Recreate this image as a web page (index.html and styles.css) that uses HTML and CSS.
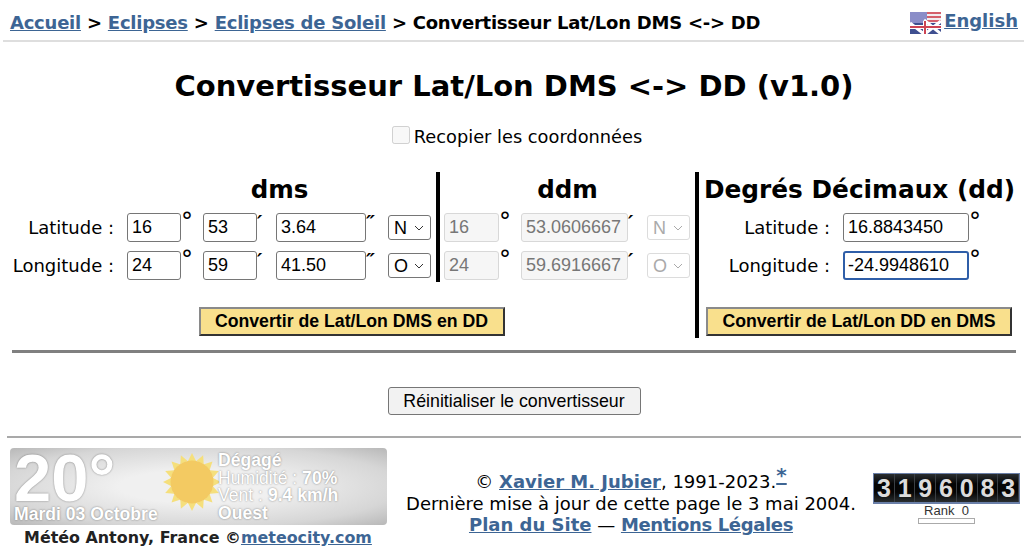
FILE: index.html
```html
<!DOCTYPE html>
<html lang="fr">
<head>
  <meta charset="UTF-8" />
  <meta name="viewport" content="width=device-width, initial-scale=1.0"/>
  <title>Convertisseur Lat/Lon DMS &lt;-&gt; DD</title>
  <link rel="stylesheet" href="styles.css">
</head>
<body>

  <div class="top-bar">
    <div class="crumbs">
      <a href="#">Accueil</a> &gt; <a href="#">Eclipses</a> &gt; <a href="#">Eclipses de Soleil</a> &gt; Convertisseur Lat/Lon DMS &lt;-&gt; DD
    </div>
    <div class="lang">
      <svg class="flag" viewBox="0 0 31 22" width="31" height="22">
        <rect width="31" height="22" fill="#f1edf1"/>
        <rect x="15" y="0" width="16" height="2" fill="#d4606c"/>
        <rect x="15" y="4" width="16" height="2" fill="#d4606c"/>
        <rect x="15" y="8" width="16" height="2" fill="#d4606c"/>
        <rect width="17" height="11" fill="#8a8dc8"/>
        <rect y="11" width="31" height="11" fill="#3f4f90"/>
        <path d="M0 11 L14 22 M31 9 L15 22" stroke="#fff" stroke-width="3"/>
        <path d="M14 8 L31 22" stroke="#fff" stroke-width="3"/>
        <path d="M0 15 H31 M15 9 V22" stroke="#fff" stroke-width="4"/>
        <path d="M0 15 H31 M15 9 V22" stroke="#cc4454" stroke-width="2"/>
      </svg>
      <a href="#">English</a>
    </div>
  </div>

  <h1>Convertisseur Lat/Lon DMS &lt;-&gt; DD (v1.0)</h1>

  <label class="copy-row">
    <input type="checkbox" disabled>
    Recopier les coordonnées
  </label>

  <div class="converter">
    <div class="left-part">
      <div class="columns">
        <div class="col-dms">
          <h2 class="dms-title">dms</h2>
          <div class="row">
            <span class="row-label">Latitude :</span>
            <input class="w-deg" type="text" value="16"><span class="mark gap-deg">°</span>
            <input class="w-deg" type="text" value="53"><span class="mark slant gap-min">′</span>
            <input class="w-sec" type="text" value="3.64"><span class="mark slant gap-deg">″</span>
            <select class="w-sel"><option>N</option></select>
          </div>
          <div class="row">
            <span class="row-label">Longitude :</span>
            <input class="w-deg" type="text" value="24"><span class="mark gap-deg">°</span>
            <input class="w-deg" type="text" value="59"><span class="mark slant gap-min">′</span>
            <input class="w-sec" type="text" value="41.50"><span class="mark slant gap-deg">″</span>
            <select class="w-sel"><option>O</option></select>
          </div>
        </div>
        <div class="col-ddm">
          <h2>ddm</h2>
          <div class="row">
            <input class="w-deg-off" type="text" value="16" disabled><span class="mark gap-deg">°</span>
            <input class="w-ddm" type="text" value="53.0606667" disabled><span class="mark slant gap-min">′</span>
            <select class="w-sel" disabled><option>N</option></select>
          </div>
          <div class="row">
            <input class="w-deg-off" type="text" value="24" disabled><span class="mark gap-deg">°</span>
            <input class="w-ddm" type="text" value="59.6916667" disabled><span class="mark slant gap-min">′</span>
            <select class="w-sel" disabled><option>O</option></select>
          </div>
        </div>
      </div>
      <div class="button-row">
        <button class="convert" type="button">Convertir de Lat/Lon DMS en DD</button>
      </div>
    </div>
    <div class="col-dd">
      <h2>Degrés Décimaux (dd)</h2>
      <div class="row">
        <span class="row-label dd-label">Latitude :</span>
        <input class="w-dd" type="text" value="16.8843450"><span class="mark">°</span>
      </div>
      <div class="row">
        <span class="row-label dd-label">Longitude :</span>
        <input class="w-dd focused" type="text" value="-24.9948610"><span class="mark">°</span>
      </div>
      <div class="button-row">
        <button class="convert" type="button">Convertir de Lat/Lon DD en DMS</button>
      </div>
    </div>
  </div>

  <hr class="rule-main">

  <div class="reset-row">
    <button class="reset" type="button">Réinitialiser le convertisseur</button>
  </div>

  <hr class="rule-foot">

  <div class="footer">
    <div class="weather-box">
      <div class="weather">
        <div class="weather-main">
          <div class="temp">20°</div>
          <div class="day">Mardi 03 Octobre</div>
        </div>
        <svg class="sun" viewBox="-30 -30 60 60" width="60" height="60">
          <g fill="#f5df7c">
            <polygon id="ray" points="-4,-21 0,-29 4,-21"/>
            <use href="#ray" transform="rotate(22.5)"/>
            <use href="#ray" transform="rotate(45)"/>
            <use href="#ray" transform="rotate(67.5)"/>
            <use href="#ray" transform="rotate(90)"/>
            <use href="#ray" transform="rotate(112.5)"/>
            <use href="#ray" transform="rotate(135)"/>
            <use href="#ray" transform="rotate(157.5)"/>
            <use href="#ray" transform="rotate(180)"/>
            <use href="#ray" transform="rotate(202.5)"/>
            <use href="#ray" transform="rotate(225)"/>
            <use href="#ray" transform="rotate(247.5)"/>
            <use href="#ray" transform="rotate(270)"/>
            <use href="#ray" transform="rotate(292.5)"/>
            <use href="#ray" transform="rotate(315)"/>
            <use href="#ray" transform="rotate(337.5)"/>
          </g>
          <circle r="21.5" fill="#f3ca62"/>
        </svg>
        <div class="weather-info">
          <b>Dégagé</b>
          <span>Humidité : <b>70%</b></span>
          <span>Vent : <b>9.4 km/h</b></span>
          <b>Ouest</b>
        </div>
      </div>
      <div class="weather-caption">Météo Antony, France ©<a href="#">meteocity.com</a></div>
    </div>

    <div class="credits">
      <div>© <a href="#"><b>Xavier M. Jubier</b></a>, 1991-2023.<a class="star" href="#"><b>*</b></a></div>
      <div>Dernière mise à jour de cette page le 3 mai 2004.</div>
      <div><a href="#"><b>Plan du Site</b></a> — <a class="legal" href="#"><b>Mentions Légales</b></a></div>
    </div>

    <div class="counter-box">
      <div class="counter">
        <span>3</span><span>1</span><span>9</span><span>6</span><span>0</span><span>8</span><span>3</span>
      </div>
      <div class="rank">Rank&nbsp; 0</div>
      <div class="rank-bar"></div>
    </div>
  </div>

</body>
</html>
```

FILE: styles.css
```css
html, body {
  margin: 0;
  padding: 0;
  background: #fff;
}

body {
  font-family: "DejaVu Sans", Verdana, sans-serif;
  color: #000;
  overflow: hidden;
  height: 550px;
}

a {
  color: #3d6594;
}

.top-bar {
  display: flex;
  justify-content: space-between;
  align-items: flex-start;
  height: 40px;
  margin-left: 3px;
  padding: 0 6px 0 7px;
  border-bottom: 2px solid #dedede;
  font-size: 18px;
  font-weight: bold;
  line-height: 46px;
}

.crumbs {
  white-space: nowrap;
  letter-spacing: -0.24px;
}

.lang {
  display: flex;
  align-items: flex-start;
  gap: 3px;
  line-height: 42px;
}

.flag {
  margin-top: 12px;
}

h1 {
  margin: 24px 0 0;
  padding-left: 4px;
  font-size: 29px;
  line-height: 40px;
  text-align: center;
  white-space: nowrap;
}

.copy-row {
  display: flex;
  justify-content: center;
  align-items: center;
  gap: 4px;
  height: 22px;
  margin-top: 19px;
  padding-left: 10px;
  font-size: 17.8px;
}

.copy-row input {
  width: 18px;
  height: 18px;
  margin: 0 0 2px;
}

.converter {
  display: flex;
  margin: 25px 8px 0 12px;
}

.left-part {
  width: 683px;
}

.columns {
  display: flex;
}

.col-dms {
  width: 424px;
  height: 110px;
  border-right: 4px solid #000;
}

.col-ddm {
  width: 255px;
  padding-left: 4px;
  box-sizing: border-box;
}

.col-dd {
  width: 317px;
  height: 166px;
  border-left: 4px solid #000;
}

h2 {
  height: 41px;
  margin: 0;
  font-size: 24.5px;
  line-height: 35px;
  text-align: center;
  white-space: nowrap;
}

.dms-title {
  padding-left: 111px;
}

.col-ddm h2 {
  padding-right: 4px;
}

.col-dd h2 {
  margin-left: 4px;
  font-size: 24.8px;
}

.row {
  display: flex;
  align-items: center;
  height: 29px;
  margin-bottom: 9px;
}

.row-label {
  width: 102px;
  margin-right: 13px;
  padding-bottom: 1px;
  font-size: 18px;
  text-align: right;
  white-space: nowrap;
}

.dd-label {
  width: 131px;
}

input[type="text"] {
  height: 29px;
  padding: 0 4px;
  box-sizing: border-box;
  border: 1px solid #767676;
  border-radius: 3px;
  background: #fff;
  color: #000;
  font-family: "Liberation Sans", Arial, sans-serif;
  font-size: 18px;
}

input[type="text"]:disabled {
  border-color: #d8d8d8;
  background: #f6f6f6;
  color: #777;
}

input.focused {
  border: 2px solid #2f5ea8;
  padding: 0 3px;
}

select {
  appearance: none;
  height: 25px;
  padding: 0 0 0 5px;
  box-sizing: border-box;
  border: 1px solid #767676;
  border-radius: 3px;
  background: #fff url("data:image/svg+xml,%3Csvg xmlns='http://www.w3.org/2000/svg' width='10' height='6'%3E%3Cpath d='M1 1l4 4 4-4' fill='none' stroke='%23333' stroke-width='1'/%3E%3C/svg%3E") no-repeat right 6px center;
  color: #000;
  font-family: "Liberation Sans", Arial, sans-serif;
  font-size: 18px;
}

select:disabled {
  border-color: #dcdcdc;
  background-image: url("data:image/svg+xml,%3Csvg xmlns='http://www.w3.org/2000/svg' width='10' height='6'%3E%3Cpath d='M1 1l4 4 4-4' fill='none' stroke='%23aaa' stroke-width='1'/%3E%3C/svg%3E");
  color: #aaa;
  opacity: 1;
}

.w-deg { width: 54px; }
.w-deg-off { width: 55px; }
.w-sec { width: 90px; }
.w-ddm { width: 107px; }
.w-dd { width: 126px; }
.w-sel { width: 43px; }

.mark {
  align-self: flex-start;
  box-sizing: border-box;
  font-size: 24px;
  line-height: 18px;
}

.slant {
  font-style: italic;
  font-weight: bold;
  font-size: 20px;
}

.gap-deg { width: 22px; }
.gap-min { width: 19px; }

.button-row {
  display: flex;
  justify-content: center;
  margin-top: 18px;
}

.left-part .button-row {
  padding-right: 4px;
}

.col-dd .button-row {
  margin-top: 27px;
  padding-left: 3px;
}

.convert {
  width: 306px;
  height: 29px;
  padding: 0;
  border: 2px solid;
  border-color: #8a8a8a #333 #333 #8a8a8a;
  background: #f9e08d;
  color: #000;
  font-family: "Liberation Sans", Arial, sans-serif;
  font-size: 17.7px;
  font-weight: bold;
  white-space: nowrap;
}

hr {
  border: none;
  padding: 0;
}

.rule-main {
  height: 3px;
  margin: 12px 8px 0 12px;
  background: #808080;
}

.reset-row {
  display: flex;
  justify-content: center;
  margin-top: 34px;
  padding-left: 4px;
}

.reset {
  width: 253px;
  height: 28px;
  padding: 0;
  border: 1px solid #767676;
  border-radius: 3px;
  background: #f2f2f2;
  color: #000;
  font-family: "Liberation Sans", Arial, sans-serif;
  font-size: 17.8px;
}

.rule-foot {
  height: 2px;
  margin: 21px 3px 0 7px;
  background: #a9a9a9;
}

.footer {
  display: flex;
  align-items: flex-start;
  margin-top: 10px;
  padding-left: 10px;
}

.weather-box {
  width: 377px;
}

.weather {
  display: flex;
  height: 77px;
  box-sizing: border-box;
  border-radius: 4px;
  padding-left: 4px;
  background: radial-gradient(ellipse at center, #f0f0f0 30%, #d6d6d6 75%, #b8b8b8 100%);
  color: #fff;
  font-family: "Liberation Sans", Arial, sans-serif;
  font-weight: bold;
  text-shadow: 0 0 2px rgba(0, 0, 0, 0.45);
}

.weather-main {
  width: 148px;
  flex: none;
}

.temp {
  height: 56px;
  font-size: 67px;
  line-height: 60px;
  white-space: nowrap;
}

.day {
  font-size: 17.6px;
  line-height: 20px;
  white-space: nowrap;
}

.sun {
  flex: none;
  margin: 4px 0 0 0;
}

.weather-info {
  display: flex;
  flex-direction: column;
  margin-top: 4px;
  margin-left: -4px;
  font-size: 17.6px;
  line-height: 17.5px;
  white-space: nowrap;
}

.weather-info span {
  font-weight: normal;
}

.weather-caption {
  margin-top: 2px;
  padding-right: 1px;
  font-size: 15.9px;
  font-weight: bold;
  text-align: center;
  color: #222;
  white-space: nowrap;
  line-height: 22px;
}

.credits {
  width: 486px;
  box-sizing: border-box;
  margin-top: 23px;
  padding-left: 2px;
  font-size: 18px;
  line-height: 21.5px;
  text-align: center;
  white-space: nowrap;
}

.star {
  position: relative;
  top: -6px;
  font-size: 20px;
}

.legal {
  letter-spacing: -0.35px;
}

.counter-box {
  display: flex;
  flex-direction: column;
  align-items: center;
  width: 147px;
  margin-top: 25px;
}

.counter {
  display: flex;
  box-sizing: border-box;
  width: 147px;
  height: 31px;
  border: 1px solid #6a7fa8;
  border-bottom-width: 2px;
  background: #10181c;
  font-family: "Liberation Sans", Arial, sans-serif;
  font-size: 25px;
  font-weight: bold;
  line-height: 28px;
  color: #dcdcdc;
}

.counter span {
  flex: 1;
  text-align: center;
  background: linear-gradient(#2a2e30, #050505 35%, #050505 65%, #2a2e30);
  border-right: 1px solid #3a3f44;
}

.rank {
  margin-top: 1px;
  font-family: "Liberation Sans", Arial, sans-serif;
  font-size: 13px;
  line-height: 12px;
  color: #333;
}

.rank-bar {
  width: 57px;
  height: 6px;
  margin-top: 1px;
  border: 1px solid #aaa;
  box-sizing: border-box;
}
```
